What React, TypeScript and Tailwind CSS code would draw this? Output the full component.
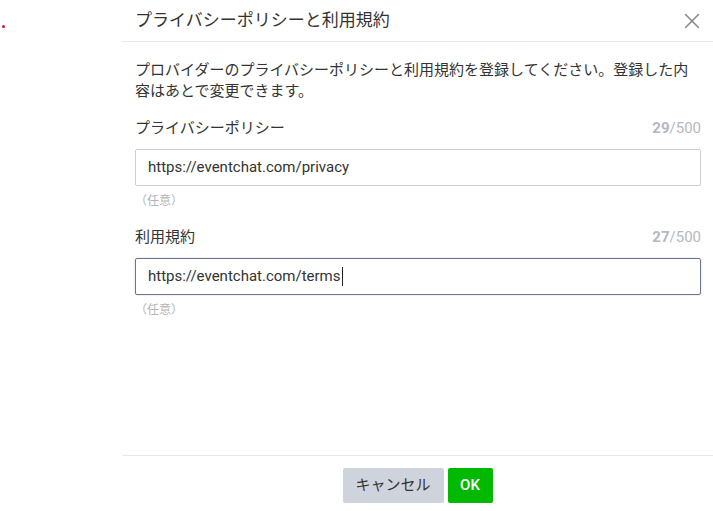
import { X } from "lucide-react";

const font = { fontFamily: '"Roboto", "Noto Sans CJK JP", sans-serif' };

function Field({
  label,
  count,
  value,
  focused,
}: {
  label: string;
  count: number;
  value: string;
  focused?: boolean;
}) {
  return (
    <div className="flex flex-col">
      <div className="flex h-[21px] items-center justify-between text-[15px] leading-[21px]">
        <span className="text-[#333]">{label}</span>
        <span className="text-[#b4b8bf]">
          <span className="font-bold">{count}</span>/500
        </span>
      </div>
      <div
        className={
          focused
            ? "mt-[10px] flex h-[37px] items-center rounded-[2px] border border-[#6b7493] pl-[12px] text-[15px] text-[#333] shadow-[0_0_2px_rgba(107,116,147,0.35)]"
            : "mt-[10px] flex h-[37px] items-center rounded-[2px] border border-[#cfcfcf] pl-[12px] text-[15px] text-[#333]"
        }
      >
        <span>{value}</span>
        {focused && <span className="ml-px inline-block h-[19px] w-px bg-[#222]" />}
      </div>
      <div className="mt-[6px] h-[18px] text-[12px] leading-[18px] text-[#b5b5b5]">（任意）</div>
    </div>
  );
}

export default function App() {
  return (
    <div className="flex h-[511px] w-[713px] overflow-hidden bg-white" style={font}>
      <div className="relative w-[122px] shrink-0">
        <span className="absolute left-[2px] top-[25px] h-[3px] w-[3px] rounded-full bg-[#e0132c]" />
      </div>
      <div className="flex min-w-0 flex-1 flex-col">
        <header className="flex h-[42px] items-center justify-between border-b border-[#e8e8e8] pl-[13px] pr-[8px]">
          <h1 className="text-[17px] text-[#333]">プライバシーポリシーと利用規約</h1>
          <X size={26} strokeWidth={1.4} className="text-[#8a8a8a]" />
        </header>
        <main className="flex flex-1 flex-col pl-[13px] pr-[12px] pt-[18px]">
          <p className="text-[15px] leading-[21px] text-[#333]">
            プロバイダーのプライバシーポリシーと利用規約を登録してください。登録した内容はあとで変更できます。
          </p>
          <div className="mt-[16px] flex flex-col gap-[17px]">
            <Field label="プライバシーポリシー" count={29} value="https://eventchat.com/privacy" />
            <Field label="利用規約" count={27} value="https://eventchat.com/terms" focused />
          </div>
        </main>
        <footer className="flex h-[56px] justify-center gap-[4px] border-t border-[#e8e8e8] pt-[12px]">
          <button
            type="button"
            className="h-[35px] w-[101px] rounded-[2px] bg-[#cfd4dc] text-[15px] text-[#333]"
          >
            キャンセル
          </button>
          <button
            type="button"
            className="h-[35px] w-[45px] rounded-[2px] bg-[#00b900] text-[15px] font-medium text-white"
          >
            OK
          </button>
        </footer>
      </div>
    </div>
  );
}
